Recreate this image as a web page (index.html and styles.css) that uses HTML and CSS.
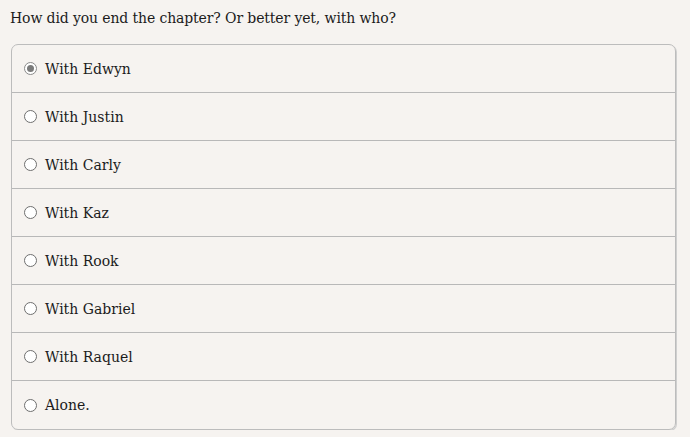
FILE: index.html
```html
<!DOCTYPE html>
<html>
<head>
<meta charset="utf-8">
<link rel="stylesheet" href="styles.css">
</head>
<body>
<p class="question">How did you end the chapter? Or better yet, with who?</p>
<ul class="poll">
  <li class="opt"><span class="radio checked"></span><span class="label">With Edwyn</span></li>
  <li class="opt"><span class="radio"></span><span class="label">With Justin</span></li>
  <li class="opt"><span class="radio"></span><span class="label">With Carly</span></li>
  <li class="opt"><span class="radio"></span><span class="label">With Kaz</span></li>
  <li class="opt"><span class="radio"></span><span class="label">With Rook</span></li>
  <li class="opt"><span class="radio"></span><span class="label">With Gabriel</span></li>
  <li class="opt"><span class="radio"></span><span class="label">With Raquel</span></li>
  <li class="opt"><span class="radio"></span><span class="label">Alone.</span></li>
</ul>
</body>
</html>
```
FILE: styles.css
```css
html, body {
  margin: 0;
  padding: 0;
  background: #f6f3f0;
}
body {
  font-family: "DejaVu Serif", Georgia, serif;
  color: #1b1b1b;
  padding: 0 12px 0 11px;
}
.question {
  margin: 0 0 0 -1px;
  padding-top: 8px;
  font-size: 14px;
  letter-spacing: -0.12px;
  line-height: 20px;
  height: 44px;
  box-sizing: border-box;
}
.poll {
  list-style: none;
  margin: 0;
  padding: 0;
  border: 1px solid #bcbcbc;
  border-radius: 7px;
  box-shadow: 1px 1px 0 #cfcfcf;
  width: 665px;
  box-sizing: border-box;
}
.opt {
  display: flex;
  align-items: center;
  height: 48px;
  padding-left: 12px;
  border-top: 1px solid #b8b8b8;
  box-sizing: border-box;
}
.opt:first-child {
  border-top: none;
  height: 47px;
}
.opt:last-child {
  height: 49px;
}
.radio {
  width: 13px;
  height: 13px;
  border: 1px solid #6f6f6f;
  border-radius: 50%;
  background: #fff;
  box-sizing: border-box;
  margin-right: 8px;
  position: relative;
  flex: none;
}
.radio.checked {
  border-color: #8a8a8a;
}
.radio.checked::after {
  content: "";
  position: absolute;
  left: 2px;
  top: 2px;
  width: 7px;
  height: 7px;
  border-radius: 50%;
  background: #7a7a7a;
}
.label {
  font-size: 14px;
  line-height: 20px;
}
```
